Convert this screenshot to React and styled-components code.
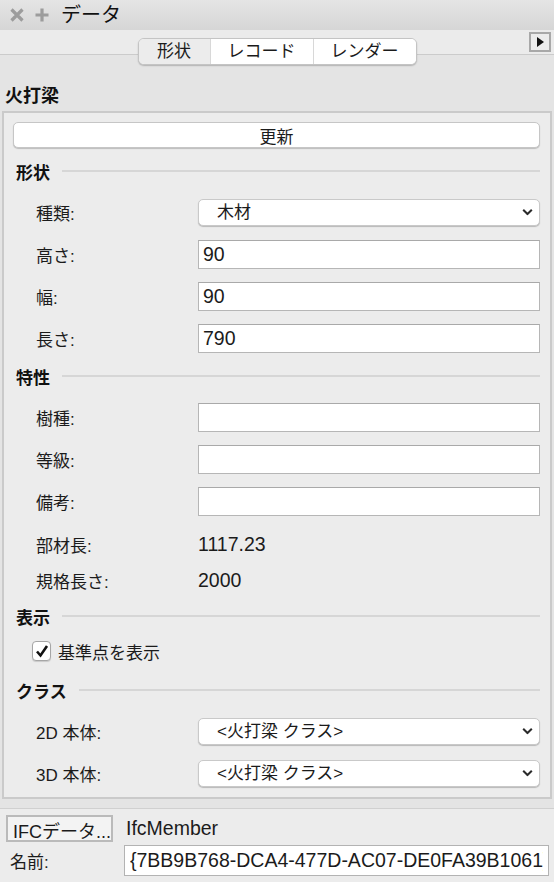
import React from "react";
import styled, { createGlobalStyle } from "styled-components";

const GlobalStyle = createGlobalStyle`
  html, body {
    margin: 0;
    padding: 0;
  }
  body {
    background: #e4e4e4;
    font-family: "Liberation Sans", "Noto Sans CJK JP", sans-serif;
    color: #1b1b1b;
  }
  * {
    box-sizing: border-box;
  }
`;

const Window = styled.div`
  width: 554px;
  height: 882px;
  display: flex;
  flex-direction: column;
  overflow: hidden;
  background: #e4e4e4;
`;

const TitleBar = styled.div`
  height: 30px;
  flex: none;
  display: flex;
  align-items: center;
  padding-left: 9px;
  gap: 9px;
  background: linear-gradient(#e5e5e5, #d6d6d6);
`;

const TitleText = styled.span`
  font-size: 20px;
  line-height: 30px;
  margin-left: 2px;
  color: #111;
`;

const TabStrip = styled.div`
  height: 25px;
  flex: none;
  display: grid;
  grid-template-columns: 1fr auto 1fr;
  align-items: start;
  background: #ebebeb;
  border-bottom: 1px solid #cbcbcb;
  position: relative;
  z-index: 1;
`;

const Segmented = styled.div`
  grid-column: 2;
  margin-top: 8px;
  display: flex;
  background: #fff;
  border: 1px solid #c4c4c4;
  border-radius: 6px;
  overflow: hidden;
  box-shadow: 0 1px 1.5px rgba(0, 0, 0, 0.22);
`;

const Segment = styled.div`
  width: ${(p) => p.$w}px;
  height: 25px;
  line-height: 25px;
  text-align: center;
  font-size: 17px;
  background: ${(p) => (p.$active ? "#ececec" : "#fff")};
  border-left: ${(p) => (p.$first ? "none" : "1px solid #d8d8d8")};
`;

const PlayButton = styled.div`
  grid-column: 3;
  justify-self: end;
  margin: 2px 3px 0 0;
  width: 22px;
  height: 20px;
  border: 2px solid #a8a8a8;
  background: #ececec;
  display: flex;
  align-items: center;
  justify-content: center;
`;

const Heading = styled.div`
  margin: 30px 0 4px 5px;
  font-size: 18px;
  font-weight: bold;
  line-height: 22px;
  color: #111;
`;

const Panel = styled.div`
  margin: 0 2px 9px;
  border: 2px solid #cacaca;
  background: #ececec;
  padding: 9px 10px 3px 9px;
  display: flex;
  flex-direction: column;
  flex: none;
`;

const UpdateButton = styled.button`
  height: 26px;
  width: 100%;
  background: #fff;
  border: 1px solid #c6c6c6;
  border-radius: 5px;
  box-shadow: 0 1px 1px rgba(0, 0, 0, 0.2);
  font-family: inherit;
  font-size: 17px;
  color: #1b1b1b;
  padding: 0;
`;

const SectionHeader = styled.div`
  display: flex;
  align-items: center;
  gap: 12px;
  height: 22px;
  margin-top: ${(p) => p.$top}px;
  margin-bottom: 9px;
  padding-left: 3px;
  font-size: 17px;
  font-weight: bold;
  color: #111;

  &::after {
    content: "";
    flex: 1;
    height: 2px;
    background: #d6d6d6;
  }
`;

const Row = styled.div`
  display: grid;
  grid-template-columns: 185px 1fr;
  align-items: center;
  height: ${(p) => p.$h || 42}px;
`;

const Label = styled.span`
  padding-left: 23px;
  font-size: 17px;
`;

const Value = styled.span`
  font-size: 19.5px;
`;

const TextInput = styled.input`
  height: 29px;
  width: 100%;
  border: 1px solid #b6b6b6;
  border-top-color: #a9a9a9;
  background: #fff;
  padding: 0 4px;
  font-family: inherit;
  font-size: 19.5px;
  color: #1b1b1b;
  outline: none;
`;

const SelectWrap = styled.div`
  position: relative;
  height: 27px;
`;

const Select = styled.select`
  appearance: none;
  width: 100%;
  height: 27px;
  border: 1px solid #c9c9c9;
  border-radius: 5px;
  box-shadow: 0 1px 1px rgba(0, 0, 0, 0.22);
  background: #fff;
  padding: 0 30px 0 18px;
  font-family: inherit;
  font-size: 17px;
  color: #1b1b1b;
  outline: none;
`;

const Chevron = styled.svg`
  position: absolute;
  right: 7px;
  top: 50%;
  transform: translateY(-50%);
  pointer-events: none;
`;

const CheckRow = styled.label`
  display: flex;
  align-items: center;
  gap: 7px;
  height: 30px;
  padding-left: 19px;
  font-size: 17px;
`;

const CheckBox = styled.span`
  width: 19px;
  height: 20px;
  border: 1px solid #a6a6a6;
  border-radius: 4px;
  background: #fff;
  box-shadow: 0 1px 1px rgba(0, 0, 0, 0.15);
  display: flex;
  align-items: center;
  justify-content: center;
`;

const Footer = styled.div`
  flex: 1;
  border-top: 1px solid #d0d0d0;
  background: #ececec;
  padding: 6px 5px 0 6px;
`;

const IfcRow = styled.div`
  display: flex;
  align-items: center;
  gap: 13px;
`;

const IfcButton = styled.button`
  width: 107px;
  height: 27px;
  border: 2px solid #bababa;
  background: #f3f3f3;
  padding: 0 0 0 5px;
  text-align: left;
  white-space: nowrap;
  overflow: hidden;
  font-family: inherit;
  font-size: 18px;
  color: #1b1b1b;
`;

const NameRow = styled.div`
  display: grid;
  grid-template-columns: 118px 1fr;
  align-items: center;
  margin-top: 3px;
`;

const NameLabel = styled.span`
  padding-left: 4px;
  font-size: 17px;
`;

const NameInput = styled(TextInput)`
  height: 31px;
  padding: 0 5px;
  border-color: #b3b3b3;
`;

const Dropdown = ({ value }) => (
  <SelectWrap>
    <Select defaultValue={value}>
      <option>{value}</option>
    </Select>
    <Chevron width="11" height="7" viewBox="0 0 11 7">
      <path d="M1.2 1.2 L5.5 5.5 L9.8 1.2" fill="none" stroke="#2a2a2a" strokeWidth="2" />
    </Chevron>
  </SelectWrap>
);

const Field = ({ label, value = "" }) => (
  <Row>
    <Label>{label}</Label>
    <TextInput defaultValue={value} />
  </Row>
);

export default function App() {
  return (
    <Window>
      <GlobalStyle />
      <TitleBar>
        <svg width="16" height="16" viewBox="0 0 16 16">
          <path d="M2.5 2.5 L13.5 13.5 M13.5 2.5 L2.5 13.5" stroke="#9c9c9c" strokeWidth="3.2" />
        </svg>
        <svg width="16" height="16" viewBox="0 0 16 16">
          <path d="M8 1.5 V14.5 M1.5 8 H14.5" stroke="#9c9c9c" strokeWidth="3.2" />
        </svg>
        <TitleText>データ</TitleText>
      </TitleBar>

      <TabStrip>
        <Segmented>
          <Segment $w={71} $first $active>形状</Segment>
          <Segment $w={103}>レコード</Segment>
          <Segment $w={103}>レンダー</Segment>
        </Segmented>
        <PlayButton>
          <svg width="7" height="10" viewBox="0 0 7 10">
            <path d="M0 0 L7 5 L0 10 Z" fill="#111" />
          </svg>
        </PlayButton>
      </TabStrip>

      <Heading>火打梁</Heading>

      <Panel>
        <UpdateButton>更新</UpdateButton>

        <SectionHeader $top={12}>形状</SectionHeader>
        <Row>
          <Label>種類:</Label>
          <Dropdown value="木材" />
        </Row>
        <Field label="高さ:" value="90" />
        <Field label="幅:" value="90" />
        <Field label="長さ:" value="790" />

        <SectionHeader $top={6}>特性</SectionHeader>
        <Field label="樹種:" />
        <Field label="等級:" />
        <Field label="備考:" />
        <Row $h={44}>
          <Label>部材長:</Label>
          <Value>1117.23</Value>
        </Row>
        <Row $h={28}>
          <Label>規格長さ:</Label>
          <Value>2000</Value>
        </Row>

        <SectionHeader $top={11}>表示</SectionHeader>
        <CheckRow>
          <CheckBox>
            <svg width="14" height="14" viewBox="0 0 14 14">
              <path d="M2 7.5 L5.5 11.5 L12 2" fill="none" stroke="#111" strokeWidth="2.6" />
            </svg>
          </CheckBox>
          基準点を表示
        </CheckRow>

        <SectionHeader $top={13}>クラス</SectionHeader>
        <Row>
          <Label>2D 本体:</Label>
          <Dropdown value="<火打梁 クラス>" />
        </Row>
        <Row>
          <Label>3D 本体:</Label>
          <Dropdown value="<火打梁 クラス>" />
        </Row>
      </Panel>

      <Footer>
        <IfcRow>
          <IfcButton>IFCデータ...</IfcButton>
          <Value>IfcMember</Value>
        </IfcRow>
        <NameRow>
          <NameLabel>名前:</NameLabel>
          <NameInput defaultValue="{7BB9B768-DCA4-477D-AC07-DE0FA39B1061}" />
        </NameRow>
      </Footer>
    </Window>
  );
}
